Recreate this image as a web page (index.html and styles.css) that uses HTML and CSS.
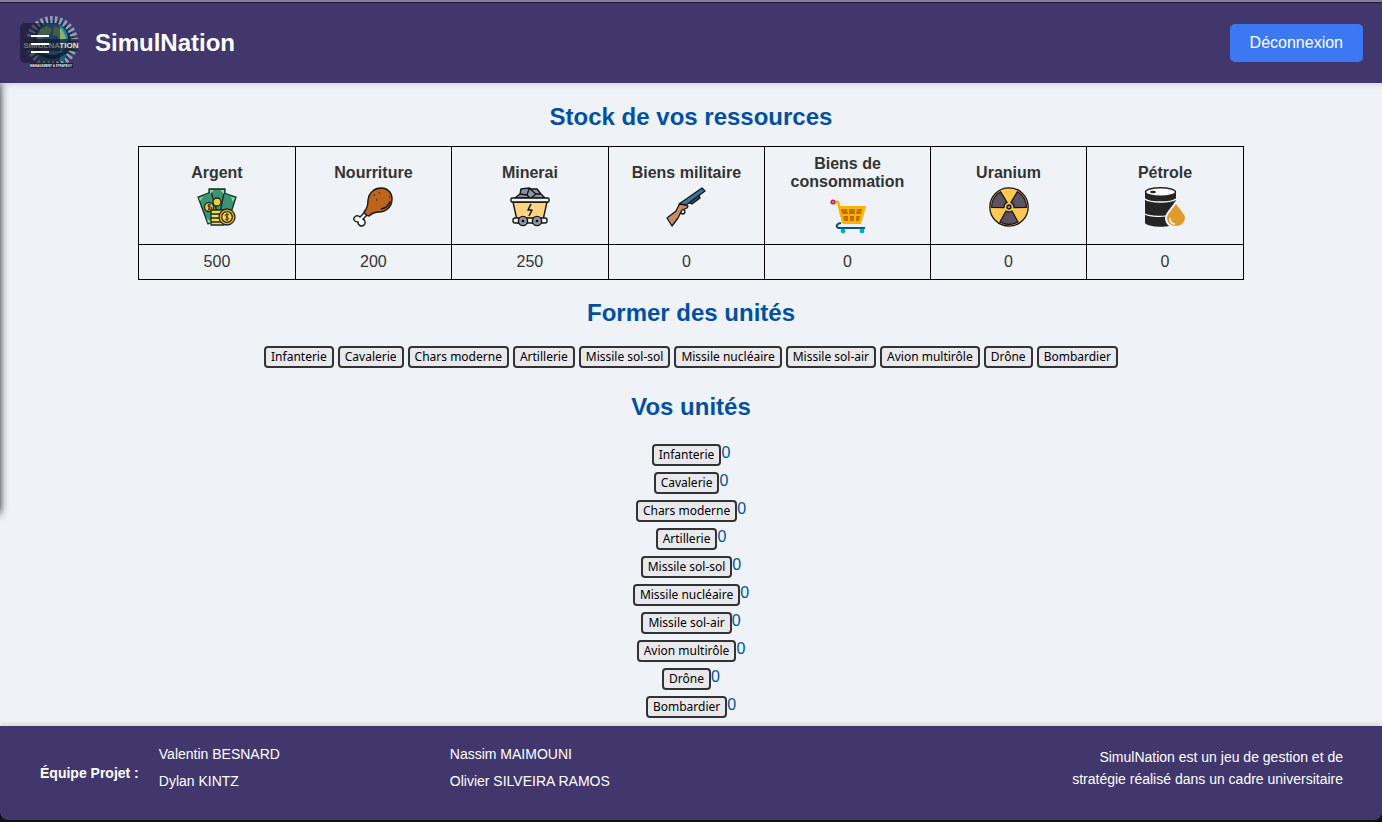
FILE: index.html
```html
<!DOCTYPE html>
<html lang="fr">
<head>
<meta charset="utf-8">
<title>SimulNation</title>
<link rel="stylesheet" href="styles.css">
</head>
<body>
<header class="topbar">
  <div class="brand">
    <div class="logo">
      <svg class="logo-img" viewBox="0 0 56 56" aria-hidden="true">
        <circle cx="29" cy="27" r="22" fill="#1c2f47"/>
        <circle cx="29" cy="27" r="22" fill="none" stroke="#8ea3b1" stroke-width="8" stroke-dasharray="2.400 2.200"/>
        <circle cx="29" cy="27" r="19" fill="#16293f"/>
        <circle cx="29" cy="24" r="16" fill="#2580ab"/>
        <path d="M17 15l7-4 5 3-2 5-5 1-3 6-5-3zM31 11l8 3 4 9-5 3-4-5-4-1z" fill="#86b56f"/>
        <path d="M14 38q15 12 30 0l-3 8H17z" fill="#245e75"/>
        <rect x="2" y="24" width="53" height="12" fill="#1b2634" opacity=".75"/>
        <text class="logo-name" x="28" y="33" text-anchor="middle">SIMULNATION</text>
        <rect x="7" y="48" width="43" height="5" fill="#1b2238"/>
        <text class="logo-sub" x="28" y="52" text-anchor="middle">MANAGEMENT &amp; STRATEGY</text>
      </svg>
      <button class="menu" type="button" aria-label="Menu"><span></span><span></span><span></span></button>
    </div>
    <span class="site-name">SimulNation</span>
  </div>
  <button class="logout" type="button">Déconnexion</button>
</header>
<main class="content">
  <h2 class="title">Stock de vos ressources</h2>
  <table class="stock">
    <colgroup><col><col><col><col><col class="wide"><col><col></colgroup>
    <thead>
      <tr>
        <th>Argent
          <svg class="icon" viewBox="0 0 40 40" aria-hidden="true"><g stroke="#172b26" stroke-width="1.3" stroke-linejoin="round"><path d="M12 2h16v31H12z" fill="#3b9476"/><path d="M27 6l12 4-8 25-9-4z" fill="#3b9476"/><path d="M1 10l13-5 8 26-11 6z" fill="#3b9476"/><circle cx="20" cy="15" r="4" fill="#f6c844"/><circle cx="12" cy="20" r="4.5" fill="#f6c844"/><path d="M14 23h13v15H14zM14 27h13M14 31h13M14 35h13" fill="#ffda4d"/><circle cx="30" cy="30" r="8" fill="#f7a51c"/><circle cx="30" cy="30" r="5.3" fill="#ffd84f"/></g><path d="M2 11l4-1-3 4zM13 3h4l-4 4zM27 3h-4l4 4zM38 11l-4-1 2 5zM11 36l3-1-4-4z" fill="#8ce477"/><path d="M32 28c-4-2-5 1-2 2s2 4-2 2M30 26v8M14 18c-4-1-4 2-1 2s2 3-2 2M12 17v6" stroke="#292211" fill="none"/></svg>
        </th>
        <th>Nourriture
          <svg class="icon" viewBox="0 0 40 40" aria-hidden="true"><path d="M12 25l-5 5c-3-3-7 0-6 3 1 2 3 2 4 2 0 4 4 5 6 3s1-5-1-6l5-5z" fill="#fff" stroke="#161616" stroke-width="1.4"/><path d="M11 25c4-4 4-8 4-12C16 5 22 1 28 1c7 0 11 5 11 11 0 8-6 13-13 13-5 0-7 1-10 4-2 0-4-2-5-4z" fill="#bb651d" stroke="#161616" stroke-width="1.4"/><path d="M37 14c-1 5-4 7-9 8" stroke="#161616" stroke-width="1.4" fill="none"/><path d="M21 8h1M26 6h1M23 13h1M36 10h1" stroke="#301b0b" stroke-width="1.5"/></svg>
        </th>
        <th>Minerai
          <svg class="icon" viewBox="0 0 40 40" aria-hidden="true"><g stroke="#151515" stroke-width="1.4" stroke-linejoin="round"><path d="M5 11l5-4 1-5 8-1 2 1h6l4 5 4 4z" fill="#8e94aa"/><path d="M10 7l7 1 3 3M19 2l-2 6M20 2l6 5 5 0M26 7l-5 4" fill="none"/><path d="M3 15h34l-4 18H7z" fill="#ffd382"/><rect x="1" y="11" width="38" height="4" rx="1" fill="#f5f3ef"/><rect x="3" y="31" width="34" height="5" rx="2" fill="#f5f3ef"/><circle cx="13" cy="34" r="4.6" fill="#8e94aa"/><circle cx="27" cy="34" r="4.6" fill="#8e94aa"/><path d="M21 17l-3 6h4l-3 6" fill="none" stroke-width="1.6"/></g><circle cx="13" cy="34" r="1.3"/><circle cx="27" cy="34" r="1.3"/></svg>
        </th>
        <th>Biens militaire
          <svg class="icon" viewBox="0 0 40 40" aria-hidden="true"><g stroke="#151515" stroke-width="1.3" stroke-linejoin="round"><path d="M14 24c1 4 5 4 5 0l-2-2" fill="#eff3f8"/><path d="M13 18l4-2 5 3-1 2-5 2-2 4-2 4-6 8-5-8 9-7z" fill="#c98b62"/><path d="M23 13l10-5 1 3-8 6-3-1z" fill="#294f6d"/><path d="M13 17L36 1l3 3-19 14z" fill="#3975a0"/></g></svg>
        </th>
        <th>Biens de consommation
          <svg class="icon" viewBox="0 0 40 40" aria-hidden="true"><path d="M7 6h4l5 20h16" fill="none" stroke="#ffb300" stroke-width="2.5"/><path d="M11 10h28l-5 18H16z" fill="#ffb300"/><path d="M14 13h6l1 5h-6zM22 13h6v5h-6zM30 13h5l-1 5h-5zM16 20h5v5h-4zM23 20h4v5h-4zM29 20h4l-1 5h-3z" fill="#bd7100"/><path d="M14 27c-6 1-5 5-1 5h25" fill="none" stroke="#0c5279" stroke-width="2"/><circle cx="6" cy="6" r="2.6" fill="#d81b60"/><circle cx="6" cy="6" r="1" fill="#7aaee0"/><circle cx="16" cy="35" r="2.4" fill="#00a7c7"/><circle cx="35" cy="35" r="2.4" fill="#00a7c7"/></svg>
        </th>
        <th>Uranium
          <svg class="icon" viewBox="0 0 40 40" aria-hidden="true"><g stroke="#17151b" stroke-width="1.3" stroke-linejoin="round"><circle cx="20" cy="20" r="19.2" fill="#fdc951"/><g fill="#5b5362"><path d="M17 24q3 2 6 0l6 11q-9 5-18 0z"/><path d="M17 24q3 2 6 0l6 11q-9 5-18 0z" transform="rotate(120 20 20)"/><path d="M17 24q3 2 6 0l6 11q-9 5-18 0z" transform="rotate(240 20 20)"/></g><circle cx="20" cy="20" r="2" fill="#8f8899"/></g></svg>
        </th>
        <th>Pétrole
          <svg class="icon" viewBox="0 0 40 40" aria-hidden="true"><path d="M0 5v31c4 5 27 5 31 0V5z" fill="#252525"/><ellipse cx="15.500" cy="5" rx="15" ry="4.300" fill="#fff" stroke="#252525" stroke-width="1.400"/><ellipse cx="8" cy="5" rx="3" ry="1.200" fill="#252525"/><path d="M0 12c5 4 26 4 31 0M0 27c5 3 20 3 25 1" fill="none" stroke="#fff" stroke-width="1.300"/><path d="M31 15c-4 7-10 11-10 16 0 12 20 12 20 0 0-5-6-9-10-16z" fill="#df9b2c" stroke="#f0f3f8" stroke-width="2"/><path d="M25 31c0 4 2 6 5 6" fill="none" stroke="#fff" stroke-width="1.500"/></svg>
        </th>
      </tr>
    </thead>
    <tbody><tr><td>500</td><td>200</td><td>250</td><td>0</td><td>0</td><td>0</td><td>0</td></tr></tbody>
  </table>
  <h2 class="title">Former des unités</h2>
  <div class="train">
    <button class="unit" type="button">Infanterie</button>
    <button class="unit" type="button">Cavalerie</button>
    <button class="unit" type="button">Chars moderne</button>
    <button class="unit" type="button">Artillerie</button>
    <button class="unit" type="button">Missile sol-sol</button>
    <button class="unit" type="button">Missile nucléaire</button>
    <button class="unit" type="button">Missile sol-air</button>
    <button class="unit" type="button">Avion multirôle</button>
    <button class="unit" type="button">Drône</button>
    <button class="unit" type="button">Bombardier</button>
  </div>
  <h2 class="title">Vos unités</h2>
  <ul class="owned">
    <li><button class="unit" type="button">Infanterie</button><span>0</span></li>
    <li><button class="unit" type="button">Cavalerie</button><span>0</span></li>
    <li><button class="unit" type="button">Chars moderne</button><span>0</span></li>
    <li><button class="unit" type="button">Artillerie</button><span>0</span></li>
    <li><button class="unit" type="button">Missile sol-sol</button><span>0</span></li>
    <li><button class="unit" type="button">Missile nucléaire</button><span>0</span></li>
    <li><button class="unit" type="button">Missile sol-air</button><span>0</span></li>
    <li><button class="unit" type="button">Avion multirôle</button><span>0</span></li>
    <li><button class="unit" type="button">Drône</button><span>0</span></li>
    <li><button class="unit" type="button">Bombardier</button><span>0</span></li>
  </ul>
  <div class="drawer-edge"></div>
</main>
<footer class="footer">
  <strong class="team-label">Équipe Projet :</strong>
  <ul class="team">
    <li>Valentin BESNARD</li><li>Nassim MAIMOUNI</li>
    <li>Dylan KINTZ</li><li>Olivier SILVEIRA RAMOS</li>
  </ul>
  <p class="about">SimulNation est un jeu de gestion et de stratégie réalisé dans un cadre universitaire</p>
</footer>
</body>
</html>
```
FILE: styles.css
```css
* { box-sizing: border-box; }
html { background: #111; }
body {
  margin: 0;
  min-height: 100vh;
  display: flex;
  flex-direction: column;
  font-family: "Liberation Sans", Arial, sans-serif;
  font-size: 16px;
  color: #333;
}
.topbar {
  display: flex;
  align-items: center;
  justify-content: space-between;
  height: 83px;
  padding: 0 19px;
  background: #41376d;
  border-top: 2px solid #857cae;
  box-shadow: 0 2px 5px rgba(0, 0, 0, .12), inset 0 1px #1d1b35;
  z-index: 1;
}
.brand { display: flex; align-items: center; gap: 15px; }
.logo { position: relative; width: 61px; height: 56px; }
.logo-img { width: 56px; height: 56px; margin-left: 4px; display: block; overflow: visible; }
.logo-name { font: bold 8px "Liberation Sans", sans-serif; fill: #e2e5e8; }
.logo-sub { font: bold 3px "Liberation Sans", sans-serif; fill: #f4f4f4; }
.menu {
  position: absolute;
  left: 1px;
  top: 8px;
  width: 40px;
  height: 40px;
  display: flex;
  flex-direction: column;
  align-items: center;
  justify-content: center;
  gap: 6px;
  border: 0;
  border-radius: 5px;
  background: rgba(20, 18, 38, .55);
  padding: 2px 0 0;
}
.menu span { width: 18px; height: 2px; background: #fff; }
.site-name { font-size: 24px; font-weight: bold; color: #fff; }
.logout {
  font: 16px "Liberation Sans", Arial, sans-serif;
  color: #fff;
  background: #3c78f2;
  border: 0;
  border-radius: 5px;
  padding: 10px 20px;
}
.content {
  position: relative;
  flex: 1;
  background: #eff3f8;
  text-align: center;
  padding: 20px 10% 0;
  overflow-x: clip;
}
.title { margin: 0; font-size: 24px; line-height: 28px; color: #0350a1; }
.stock { width: 100%; table-layout: fixed; border-collapse: collapse; margin: 15px 0 19px; }
.stock .wide { width: 15%; }
.stock th, .stock td { border: 1px solid #000; padding: 8px; }
.stock th { height: 98px; line-height: 18px; }
.stock td { height: 35px; line-height: 18px; }
.icon { display: block; width: 40px; height: 40px; margin: 5px auto 0; overflow: visible; }
.train { display: flex; flex-wrap: wrap; justify-content: center; gap: 4px; margin: 19px 0 25px; }
.unit {
  font: 12px/18px "Noto Sans", Tahoma, sans-serif;
  color: #000;
  background: #e9e9ed;
  border: 2px solid #333;
  border-radius: 4px;
  padding: 0 5px;
  white-space: nowrap;
}
.owned { list-style: none; margin: 0; padding: 21px 0 3px; color: #0350a1; }
.owned li { display: flex; justify-content: center; height: 28px; line-height: 22px; }
.owned .unit { align-self: flex-start; margin-top: 2px; }
.drawer-edge {
  position: absolute;
  top: 0;
  left: -10px;
  width: 10px;
  height: 430px;
  box-shadow: 0 0 8px rgba(0, 0, 0, .9);
}
.footer {
  display: flex;
  align-items: center;
  padding: 15px 39px 26px 40px;
  margin-bottom: 2px;
  background: #41376d;
  color: #fff;
  font-size: 14px;
  border-radius: 0 0 8px 8px;
  box-shadow: 0 -2px 5px rgba(0, 0, 0, .12);
  z-index: 1;
}
.team-label { padding-top: 10px; }
.team { display: grid; grid-template-columns: 291px 1fr; row-gap: 1px; list-style: none; margin: 0 0 0 20px; padding: 0; line-height: 26px; }
.about { width: 290px; margin: 0 0 0 auto; text-align: right; line-height: 22px; }
```
